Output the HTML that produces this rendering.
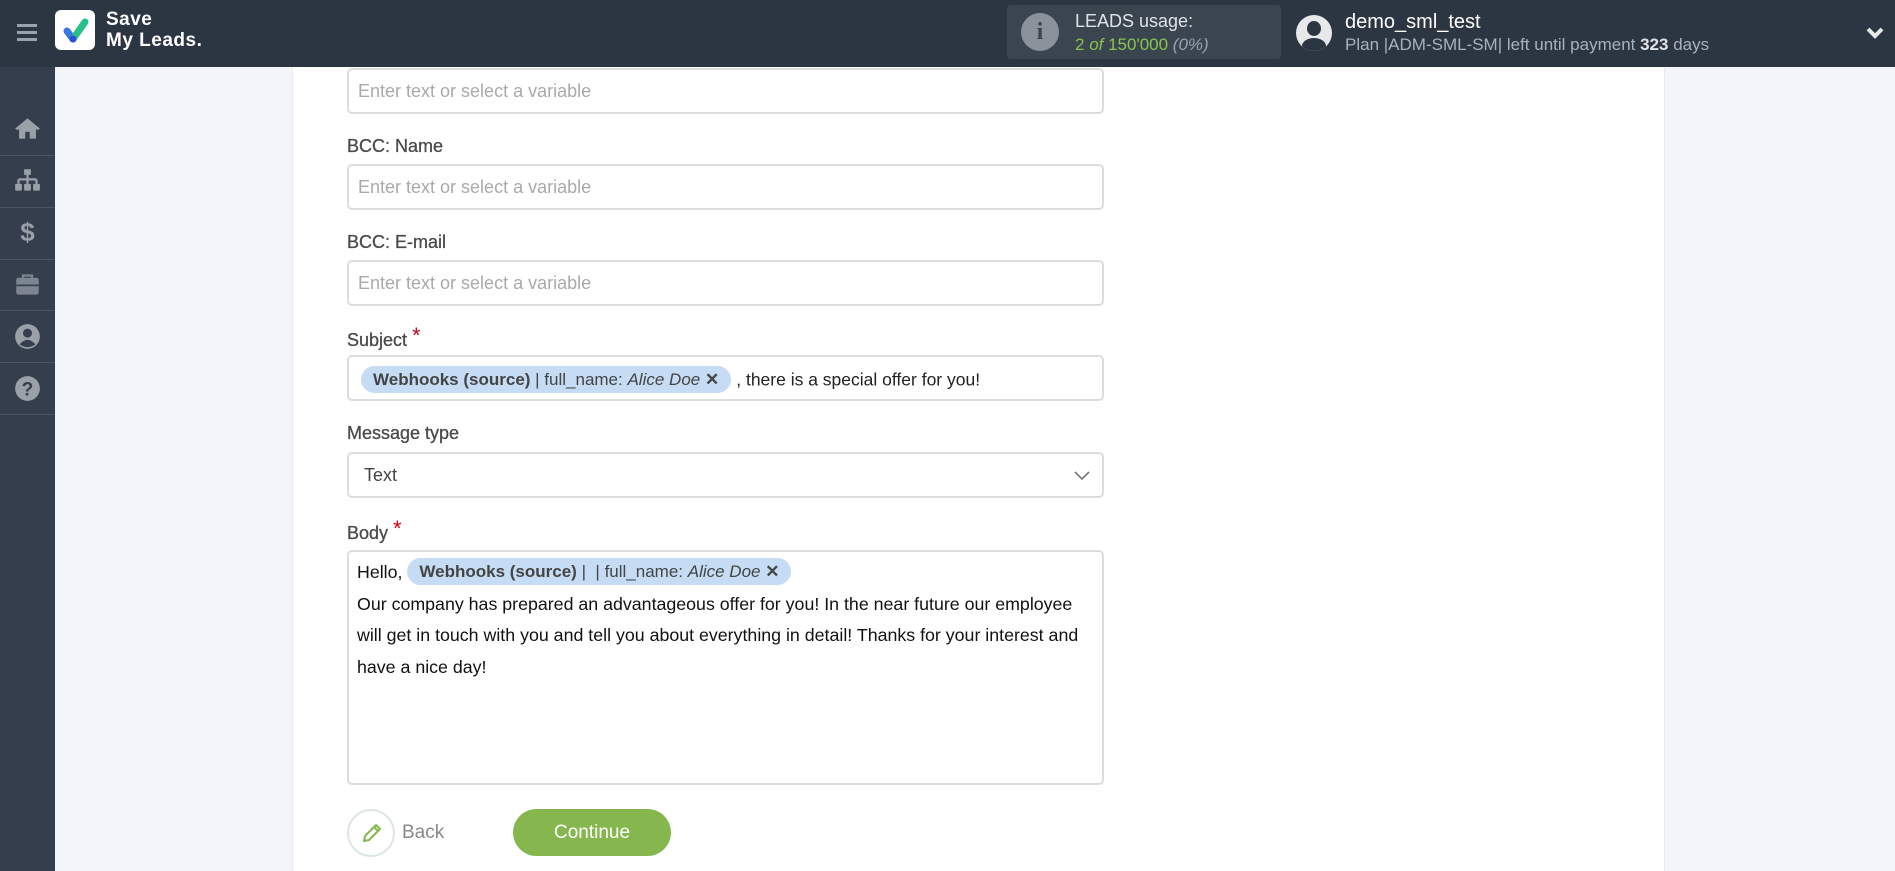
<!DOCTYPE html>
<html><head><meta charset="utf-8"><style>
*{margin:0;padding:0;box-sizing:border-box}
body{width:1895px;height:871px;overflow:hidden;background:#f2f6fb;font-family:"Liberation Sans",sans-serif;position:relative}
.top{position:absolute;left:0;top:0;width:1895px;height:67px;background:#2c3642}
.side{position:absolute;left:0;top:67px;width:55px;height:804px;background:#343e4c}
.sep{position:absolute;left:0;width:55px;height:1px;background:#4a5462}
.ic{position:absolute;left:14px;width:27px;height:27px}
.panel{position:absolute;left:292px;top:67px;width:1373px;height:804px;background:#fff;border-left:1px solid #e8ecf0;border-right:1px solid #e8ecf0}
.lbl{position:absolute;left:347px;font-size:18px;color:#4a4a4a;-webkit-text-stroke:0.3px #4a4a4a}
.inp{position:absolute;left:347px;width:757px;height:46px;border:2px solid #ddd;border-radius:5px;background:#fff;font-size:18px;line-height:42px;padding-left:9px;color:#a9a9a9}
.star{color:#d0021b;font-size:22px;position:relative;top:-3px;-webkit-text-stroke:0}
.chip{display:inline-block;background:#c5dcf4;border-radius:14px;height:27px;line-height:27px;padding:0 12px;color:#444;font-size:17px}
.chip b{color:#444}
</style></head><body>
<div class="top">
  <div style="position:absolute;left:17px;top:24px;width:20px;height:3px;background:#9aa2ad;box-shadow:0 7px 0 #9aa2ad,0 14px 0 #9aa2ad"></div>
  <div style="position:absolute;left:55px;top:10px;width:40px;height:40px;background:#fff;border-radius:6px">
    <svg width="40" height="40" viewBox="0 0 40 40"><path d="M12 21 L18 29" stroke="#3d74e8" stroke-width="7" stroke-linecap="round"/><path d="M18 29 L30 12" stroke="#27c08a" stroke-width="7" stroke-linecap="round"/><circle cx="18" cy="29" r="3.5" fill="#2d4fd6"/></svg>
  </div>
  <div style="position:absolute;left:106px;top:9px;color:#fff;font-size:19px;line-height:21px;font-weight:bold;letter-spacing:0.5px">Save<br>My Leads.</div>
  <div style="position:absolute;left:1007px;top:5px;width:274px;height:54px;background:#3a4550;border-radius:4px">
    <div style="position:absolute;left:14px;top:8px;width:38px;height:38px;border-radius:50%;background:#8a939c;color:#3a4550;font-weight:bold;font-size:24px;text-align:center;line-height:38px;font-family:'Liberation Serif',serif">i</div>
    <div style="position:absolute;left:68px;top:6px;color:#dfe3e7;font-size:18px">LEADS usage:</div>
    <div style="position:absolute;left:68px;top:30px;color:#8bc34a;font-size:17px">2 <i>of</i> 150'000 <i style="color:#9aa2ab">(0%)</i></div>
  </div>
  <div style="position:absolute;left:1296px;top:15px;width:36px;height:36px;border-radius:50%;background:#e6e8ea;overflow:hidden">
    <div style="position:absolute;left:11px;top:6px;width:14px;height:15px;border-radius:50%;background:#2c3642"></div>
    <div style="position:absolute;left:6px;top:23px;width:24px;height:16px;border-radius:50%;background:#2c3642"></div>
  </div>
  <div style="position:absolute;left:1345px;top:11px;color:#fff;font-size:20px">demo_sml_test</div>
  <div style="position:absolute;left:1345px;top:35px;color:#a9b1ba;font-size:17px">Plan |ADM-SML-SM| left until payment <b style="color:#dfe3e7">323</b> days</div>
  <svg style="position:absolute;left:1866px;top:26px" width="18" height="14" viewBox="0 0 18 14"><path d="M2 3 L9 10 L16 3" stroke="#e6e8ea" stroke-width="4" fill="none"/></svg>
</div>
<div class="side">
  <div class="sep" style="top:88px"></div><div class="sep" style="top:140px"></div><div class="sep" style="top:192px"></div><div class="sep" style="top:243px"></div><div class="sep" style="top:295px"></div><div class="sep" style="top:347px"></div>
  <svg class="ic" style="top:48px" viewBox="0 0 24 24"><path d="M12 3 L1 12 L3 13.5 L4.5 12.3 V21 H10 V15 H14 V21 H19.5 V12.3 L21 13.5 L23 12 Z" fill="#9aa0a8"/></svg>
  <svg class="ic" style="top:100px" viewBox="0 0 24 24"><rect x="9" y="2" width="6" height="5" fill="#9aa0a8"/><path d="M12 7 V11 M4 11 H20 M4 11 V15 M12 11 V15 M20 11 V15" stroke="#9aa0a8" stroke-width="2" fill="none"/><rect x="1" y="15" width="6" height="6" rx="1" fill="#9aa0a8"/><rect x="9" y="15" width="6" height="6" rx="1" fill="#9aa0a8"/><rect x="17" y="15" width="6" height="6" rx="1" fill="#9aa0a8"/></svg>
  <div class="ic" style="top:152px;color:#9aa0a8;font-weight:bold;font-size:26px;text-align:center;line-height:27px">$</div>
  <svg class="ic" style="top:204px" viewBox="0 0 24 24"><path d="M8 6 V4 H16 V6" stroke="#7d8590" stroke-width="2" fill="none"/><rect x="2" y="6" width="20" height="15" rx="2" fill="#7d8590"/><rect x="2" y="12" width="20" height="1.5" fill="#343e4c"/></svg>
  <svg class="ic" style="top:256px" viewBox="0 0 24 24"><circle cx="12" cy="12" r="11" fill="#9aa0a8"/><circle cx="12" cy="9" r="4" fill="#343e4c"/><path d="M5 19 Q12 11 19 19 Q12 24 5 19Z" fill="#343e4c"/></svg>
  <svg class="ic" style="top:308px" viewBox="0 0 24 24"><circle cx="12" cy="12" r="11" fill="#9aa0a8"/><text x="12" y="18" text-anchor="middle" font-size="17" font-weight="bold" fill="#343e4c" font-family="Liberation Sans">?</text></svg>
</div>
<div class="panel"></div>
<div class="inp" style="top:68px">Enter text or select a variable</div>
<div class="lbl" style="top:136px">BCC: Name</div>
<div class="inp" style="top:164px">Enter text or select a variable</div>
<div class="lbl" style="top:232px">BCC: E-mail</div>
<div class="inp" style="top:260px">Enter text or select a variable</div>
<div class="lbl" style="top:326px">Subject <span class="star">*</span></div>
<div class="inp" style="top:355px;padding-left:12px;line-height:42px;color:#222">
  <span class="chip" style="vertical-align:middle"><b>Webhooks (source)</b> | full_name: <i>Alice Doe</i> <b>✕</b></span> <span style="font-size:17.5px;vertical-align:middle">, there is a special offer for you!</span>
</div>
<div class="lbl" style="top:423px">Message type</div>
<div class="inp" style="top:452px;color:#444;padding-left:15px">Text
  <svg style="position:absolute;right:12px;top:17px" width="16" height="10" viewBox="0 0 16 10"><path d="M1 1 L8 8 L15 1" stroke="#777" stroke-width="1.6" fill="none"/></svg>
</div>
<div class="lbl" style="top:519px">Body <span class="star">*</span></div>
<div class="inp" style="top:550px;height:235px;color:#111;font-size:17.8px;line-height:31.5px;padding:5px 8px">
  Hello, <span class="chip" style="vertical-align:1px"><b>Webhooks (source)</b> | &nbsp;| full_name: <i>Alice Doe</i> <b>✕</b></span><br>
  Our company has prepared an advantageous offer for you! In the near future our employee<br>
  will get in touch with you and tell you about everything in detail! Thanks for your interest and<br>
  have a nice day!
</div>
<div style="position:absolute;left:347px;top:809px;width:48px;height:48px;border-radius:50%;border:2px solid #dde6e6">
  <svg style="position:absolute;left:12px;top:11px" width="22" height="22" viewBox="0 0 22 22"><path d="M3 19 L4 14 L15 3 L19 7 L8 18 Z M13 5 L17 9" stroke="#86b74f" stroke-width="2" fill="none" stroke-linejoin="round"/></svg>
</div>
<div style="position:absolute;left:402px;top:822px;font-size:19px;color:#888">Back</div>
<div style="position:absolute;left:513px;top:809px;width:158px;height:47px;border-radius:24px;background:#86b74f;color:#fff;font-size:19px;text-align:center;line-height:47px">Continue</div>
</body></html>
